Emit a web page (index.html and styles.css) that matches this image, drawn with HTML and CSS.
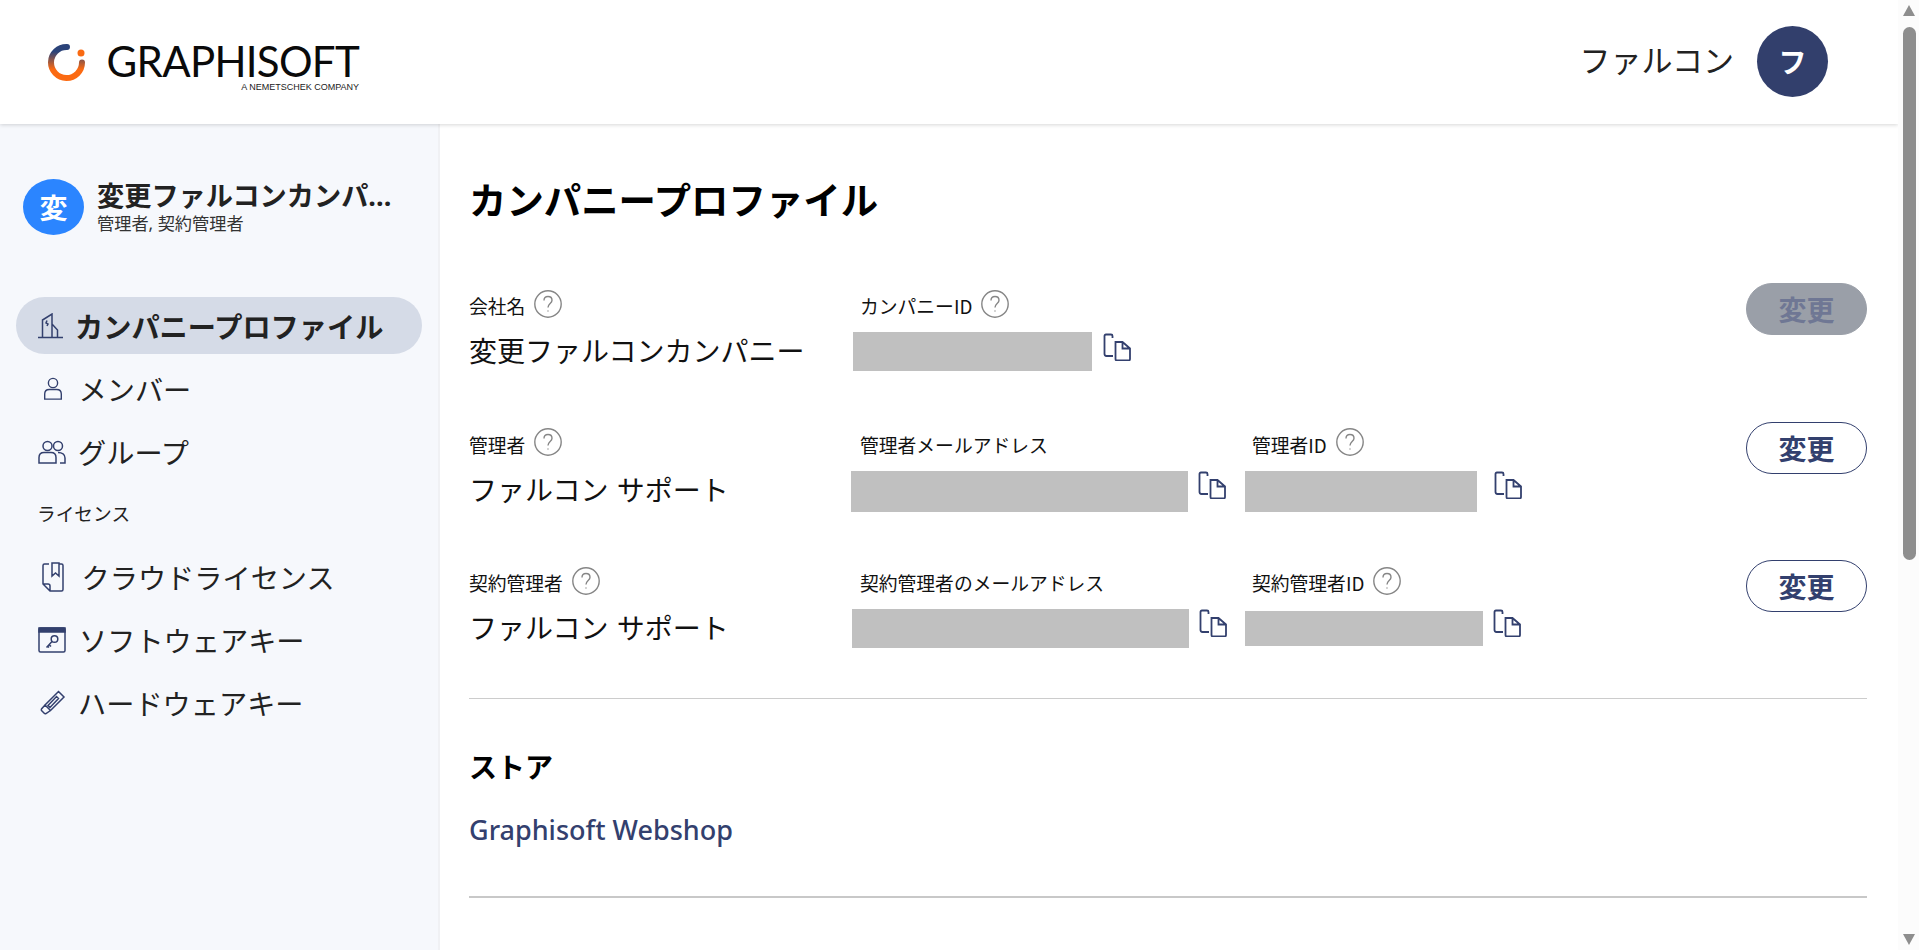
FILE: index.html
```html
<!DOCTYPE html>
<html lang="ja">
<head>
<meta charset="utf-8">
<title>カンパニープロファイル</title>
<link rel="stylesheet" href="styles.css">
</head>
<body>
<div class="page">
<header class="topbar">
  <a class="logo">
    <svg class="logo-mark" viewBox="0 0 38 38" width="38" height="38">
      <defs><linearGradient id="lg" x1="0" y1="0" x2="0" y2="1"><stop offset="0.15" stop-color="#2b4379"/><stop offset="0.72" stop-color="#fb6a12"/></linearGradient></defs>
      <path d="M20 4 A15.500 15.500 0 1 0 35 19.500" fill="none" stroke="url(#lg)" stroke-width="6" stroke-linecap="round"/>
      <circle cx="34" cy="10" r="3.500" fill="#f96a12"/>
    </svg>
    <span class="logo-text"><span class="logo-name">GRAPHISOFT</span><span class="logo-sub">A NEMETSCHEK COMPANY</span></span>
  </a>
  <div class="user"><span class="user-name">ファルコン</span><span class="user-avatar">フ</span></div>
</header>
<div class="layout">
  <aside class="sidebar">
    <div class="company">
      <span class="company-avatar">変</span>
      <div class="company-info">
        <div class="company-name">変更ファルコンカンパニー</div>
        <div class="company-role">管理者, 契約管理者</div>
      </div>
    </div>
    <nav class="nav">
      <a class="nav-item active">
        <svg class="ico" viewBox="0 0 26 26"><path d="M0 24.500H25M4.500 24.500V7L14 1V24.500M14 11L19.500 17V24.500M9 7.500L8 10L10 11L9 13"/></svg>
        <span>カンパニープロファイル</span>
      </a>
      <a class="nav-item">
        <svg class="ico ico-person" viewBox="0 0 26 26"><circle cx="13" cy="6.500" r="5"/><path d="M4 24V18.500C4 15.500 6 13.500 9 13.500H17C20 13.500 22 15.500 22 18.500V24Z"/></svg>
        <span class="t-person">メンバー</span>
      </a>
      <a class="nav-item">
        <svg class="ico ico-wide" viewBox="0 0 28 24"><circle cx="9.500" cy="6" r="4.500"/><circle cx="20" cy="6" r="4.500"/><path d="M1 23V17.500C1 14.500 3 12.500 6 12.500H13C16 12.500 18 14.500 18 17.500V23ZM20 12.500C24 12.500 27 14.500 27 18V23H22"/></svg>
        <span class="t-group">グループ</span>
      </a>
      <div class="nav-head">ライセンス</div>
      <a class="nav-item">
        <svg class="ico ico-book" viewBox="0 0 22 30"><path d="M7 2H2.500C1.500 2 1 2.500 1 3.500V22L8 29H19.500C20.500 29 21 28.500 21 27.500V3.500C21 2.500 20.500 2 19.500 2H17M1 22H6C7.500 22 8 22.500 8 24V29M10 1H17V14L13.500 11L10 14Z"/></svg>
        <span class="t-book">クラウドライセンス</span>
      </a>
      <a class="nav-item">
        <svg class="ico ico-wide" viewBox="0 0 28 26"><rect x="1" y="1" width="26" height="24" rx="1.500"/><path class="fill" d="M1 1H27V5H1Z"/><circle cx="16.500" cy="12" r="3.300"/><path d="M14 14.500L8.500 20.500M11 17.500L13 19.500M9.500 19L11 20.500"/></svg>
        <span class="t-soft">ソフトウェアキー</span>
      </a>
      <a class="nav-item">
        <svg class="ico ico-pencil" viewBox="0 0 26 26"><path d="M18.500 1.500L24 7L10.500 20.500L5 15ZM5 15L1.500 19Q1 20 1.500 20.500L4.500 23.500Q5 24 6 23.500L10.500 20.500M8 15.500L16.500 6.500L18.500 8.500L10 17.500Z"/></svg>
        <span class="t-group">ハードウェアキー</span>
      </a>
    </nav>
  </aside>
  <main class="main">
    <h1 class="title">カンパニープロファイル</h1>
    <section class="row">
      <div class="field">
        <div class="label">会社名<svg class="help" viewBox="0 0 28 28"><circle cx="14" cy="14" r="13.200"/><path d="M10 10.500C10 8 11.800 6.500 14 6.500C16.500 6.500 18 8 18 10.200C18 13.500 14 13.500 14 17.500M14 20.500V21.500"/></svg></div>
        <div class="value">変更ファルコンカンパニー</div>
      </div>
      <div class="field">
        <div class="label">カンパニーID<svg class="help" viewBox="0 0 28 28"><circle cx="14" cy="14" r="13.200"/><path d="M10 10.500C10 8 11.800 6.500 14 6.500C16.500 6.500 18 8 18 10.200C18 13.500 14 13.500 14 17.500M14 20.500V21.500"/></svg></div>
        <div class="blank-wrap"><span class="blank b-id"></span><svg class="copy copy-far" viewBox="0 0 28 28"><path d="M10 23H3.500C2 23 1.500 22 1.500 21V3C1.500 2 2 1.500 3 1.500H8C9 1.500 9.500 2 9.500 3V5"/><path d="M12.500 9H19.500L27 15.500V26C27 27 26.500 27.500 25.500 27.500H14C13 27.500 12.500 27 12.500 26ZM19.500 9V15.500H27"/></svg></div>
      </div>
      <div class="field"></div>
      <button class="btn disabled">変更</button>
    </section>
    <section class="row">
      <div class="field">
        <div class="label">管理者<svg class="help" viewBox="0 0 28 28"><circle cx="14" cy="14" r="13.200"/><path d="M10 10.500C10 8 11.800 6.500 14 6.500C16.500 6.500 18 8 18 10.200C18 13.500 14 13.500 14 17.500M14 20.500V21.500"/></svg></div>
        <div class="value">ファルコン サポート</div>
      </div>
      <div class="field">
        <div class="label">管理者メールアドレス</div>
        <div class="blank-wrap"><span class="blank b-mail"></span><svg class="copy" viewBox="0 0 28 28"><path d="M10 23H3.500C2 23 1.500 22 1.500 21V3C1.500 2 2 1.500 3 1.500H8C9 1.500 9.500 2 9.500 3V5"/><path d="M12.500 9H19.500L27 15.500V26C27 27 26.500 27.500 25.500 27.500H14C13 27.500 12.500 27 12.500 26ZM19.500 9V15.500H27"/></svg></div>
      </div>
      <div class="field">
        <div class="label">管理者ID<svg class="help" viewBox="0 0 28 28"><circle cx="14" cy="14" r="13.200"/><path d="M10 10.500C10 8 11.800 6.500 14 6.500C16.500 6.500 18 8 18 10.200C18 13.500 14 13.500 14 17.500M14 20.500V21.500"/></svg></div>
        <div class="blank-wrap"><span class="blank b-uid"></span><svg class="copy copy-far2" viewBox="0 0 28 28"><path d="M10 23H3.500C2 23 1.500 22 1.500 21V3C1.500 2 2 1.500 3 1.500H8C9 1.500 9.500 2 9.500 3V5"/><path d="M12.500 9H19.500L27 15.500V26C27 27 26.500 27.500 25.500 27.500H14C13 27.500 12.500 27 12.500 26ZM19.500 9V15.500H27"/></svg></div>
      </div>
      <button class="btn">変更</button>
    </section>
    <section class="row">
      <div class="field">
        <div class="label">契約管理者<svg class="help" viewBox="0 0 28 28"><circle cx="14" cy="14" r="13.200"/><path d="M10 10.500C10 8 11.800 6.500 14 6.500C16.500 6.500 18 8 18 10.200C18 13.500 14 13.500 14 17.500M14 20.500V21.500"/></svg></div>
        <div class="value">ファルコン サポート</div>
      </div>
      <div class="field">
        <div class="label">契約管理者のメールアドレス</div>
        <div class="blank-wrap"><span class="blank b-mail2"></span><svg class="copy" viewBox="0 0 28 28"><path d="M10 23H3.500C2 23 1.500 22 1.500 21V3C1.500 2 2 1.500 3 1.500H8C9 1.500 9.500 2 9.500 3V5"/><path d="M12.500 9H19.500L27 15.500V26C27 27 26.500 27.500 25.500 27.500H14C13 27.500 12.500 27 12.500 26ZM19.500 9V15.500H27"/></svg></div>
      </div>
      <div class="field">
        <div class="label">契約管理者ID<svg class="help" viewBox="0 0 28 28"><circle cx="14" cy="14" r="13.200"/><path d="M10 10.500C10 8 11.800 6.500 14 6.500C16.500 6.500 18 8 18 10.200C18 13.500 14 13.500 14 17.500M14 20.500V21.500"/></svg></div>
        <div class="blank-wrap"><span class="blank b-uid2"></span><svg class="copy" viewBox="0 0 28 28"><path d="M10 23H3.500C2 23 1.500 22 1.500 21V3C1.500 2 2 1.500 3 1.500H8C9 1.500 9.500 2 9.500 3V5"/><path d="M12.500 9H19.500L27 15.500V26C27 27 26.500 27.500 25.500 27.500H14C13 27.500 12.500 27 12.500 26ZM19.500 9V15.500H27"/></svg></div>
      </div>
      <button class="btn">変更</button>
    </section>
    <hr class="rule">
    <section class="store">
      <h2 class="store-title">ストア</h2>
      <a class="store-link">Graphisoft Webshop</a>
    </section>
    <hr class="rule rule-thick">
  </main>
</div>
</div>
<div class="scrollbar" aria-hidden="true">
  <span class="arrow arrow-up"></span>
  <span class="thumb"></span>
  <span class="arrow arrow-down"></span>
</div>
</body>
</html>
```
FILE: styles.css
```css
* { box-sizing: border-box; }
html, body { height: 100%; }
body { margin: 0; height: 950px; overflow: hidden; display: flex; font-family: "Noto Sans CJK JP", "Noto Sans", sans-serif; color: #222; background: #fff; }
.page { flex: 1; min-width: 0; height: 950px; overflow: hidden; display: flex; flex-direction: column; }

.scrollbar { width: 21px; flex: none; height: 950px; background: #fcfcfc; padding: 5px 3px 5px 5px; display: flex; flex-direction: column; }
.arrow { display: block; width: 0; height: 0; border-left: 6.500px solid transparent; border-right: 6.500px solid transparent; }
.arrow-up { border-bottom: 11px solid #8e8e8e; }
.arrow-down { border-top: 11px solid #8e8e8e; margin-top: auto; }
.thumb { display: block; height: 533px; margin-top: 11px; background: #8e8e8e; border-radius: 7px; }

.topbar { height: 124px; flex: none; display: flex; align-items: center; justify-content: space-between; padding: 0 70px 0 47px; background: #fff; box-shadow: 0 1px 4px rgba(0,0,0,.16); position: relative; z-index: 1; }
.logo { display: flex; align-items: flex-start; gap: 22px; margin-top: 11px; }
.logo-mark { display: block; }
.logo-text { display: flex; flex-direction: column; align-items: flex-end; width: 252px; }
.logo-name { font-family: Lato, sans-serif; font-size: 42px; line-height: 34px; height: 34px; margin-top: 1.500px; letter-spacing: -.7px; color: #0a0a0a; white-space: nowrap; }
.logo-sub { font-family: "Liberation Sans", sans-serif; font-size: 9px; line-height: 9px; margin-top: 5px; color: #222; white-space: nowrap; }
.user { display: flex; align-items: center; gap: 23px; margin-top: -2px; }
.user-name { font-size: 31px; line-height: 40px; margin-bottom: 5px; color: #222; }
.user-avatar { width: 71px; height: 71px; border-radius: 50%; background: #323f6c; color: #fff; font-size: 28px; font-weight: 700; display: flex; align-items: center; justify-content: center; }

.layout { flex: 1; display: flex; }
.sidebar { width: 440px; flex: none; background: #f6f8fc; border-right: 2px solid #f0f1f4; padding: 55px 16px 0; }
.company { display: flex; align-items: center; gap: 13px; padding-left: 7px; height: 56px; }
.company-avatar { width: 61px; height: 56px; flex: none; border-radius: 50%; background: #2b85ff; color: #fff; font-size: 28px; font-weight: 700; display: flex; align-items: center; justify-content: center; }
.company-info { min-width: 0; width: 304px; margin-top: -1px; }
.company-name { font-family: "Noto Sans", "Noto Sans CJK JP", sans-serif; font-size: 27.200px; line-height: 34px; font-weight: 700; white-space: nowrap; overflow: hidden; text-overflow: ellipsis; color: #222; }
.company-role { font-family: "Noto Sans", "Noto Sans CJK JP", sans-serif; font-size: 17.200px; line-height: 22px; color: #333; }
.nav { margin-top: 62px; display: flex; flex-direction: column; }
.nav-item { height: 57px; margin-bottom: 6px; border-radius: 29px; display: flex; align-items: center; gap: 11px; padding-left: 22px; font-size: 28.200px; color: #222; }
.nav-item.active { background: #d5dbe7; font-weight: 700; width: 406px; }
.ico { width: 26px; height: 26px; flex: none; fill: none; stroke: #33406e; stroke-width: 1.500; }
.ico .fill { fill: #33406e; }
.ico-wide { width: 28px; }
.ico-person { margin-left: 3px; width: 24px; }
.ico-book { width: 22px; height: 30px; margin-left: 4px; }
.ico-pencil { margin-left: 2px; }
.t-person { margin-left: 2.500px; }
.t-group { margin-left: 1px; }
.t-soft { margin-left: 2px; }
.t-book { margin-left: 6.500px; }
.nav-head { font-size: 18.700px; line-height: 24px; margin: 0 0 23px 21px; padding-top: 15px; color: #222; }

.main { flex: 1; min-width: 0; padding: 50px 31px 0 29px; overflow: hidden; }
.title { margin: 0; font-size: 37.400px; line-height: 50px; font-weight: 700; color: #000; }
.row { display: grid; grid-template-columns: 391px 392px 1fr 121px; height: 138.500px; }
.row:first-of-type { margin-top: 67px; }
.label { font-size: 18.800px; line-height: 30px; height: 30px; display: flex; align-items: center; color: #111; white-space: nowrap; }
.help { width: 28px; height: 28px; margin-left: 9px; margin-top: -5px; flex: none; fill: none; stroke: #868686; stroke-width: 1.400; }
.value { font-size: 28px; line-height: 44px; margin-top: 7px; color: #111; white-space: nowrap; word-spacing: 2px; }
.blank-wrap { display: flex; align-items: flex-start; margin-left: -8px; margin-top: 11px; height: 44px; }
.blank { display: block; background: #c0c0c0; flex: none; }
.b-id { width: 239px; height: 39px; margin-left: 1px; }
.b-mail { width: 337px; height: 41px; margin-left: -1px; }
.b-uid { width: 232px; height: 41px; margin-left: 1px; }
.b-mail2 { width: 337px; height: 39px; }
.b-uid2 { width: 238px; height: 35px; margin-left: 1px; margin-top: 2px; }
.copy { width: 28px; height: 28px; flex: none; margin-left: 10px; fill: none; stroke: #33406e; stroke-width: 1.800; }
.copy-far { margin-left: 11px; margin-top: 1px; }
.copy-far2 { margin-left: 17px; }
.btn { height: 52px; width: 121px; margin-top: -8px; border-radius: 26px; border: 1px solid #33406e; background: #fff; color: #33406e; font-family: inherit; font-size: 28px; font-weight: 700; padding: 0; line-height: 1; }
.btn.disabled { background: #9a9fa8; border-color: #9a9fa8; color: #6f7794; }
.rule { margin: 0; border: 0; height: 1px; background: #ccc; }
.row + .rule { margin-top: -9px; }
.rule-thick { height: 2px; background: #c8c8c8; }
.store { height: 197px; padding-top: 47px; }
.store-title { margin: 0; font-size: 28px; line-height: 40px; font-weight: 700; color: #000; }
.store-link { display: block; margin-top: 25px; font-family: "Noto Sans", sans-serif; font-size: 27px; line-height: 38px; font-weight: 500; color: #33406e; }
```
